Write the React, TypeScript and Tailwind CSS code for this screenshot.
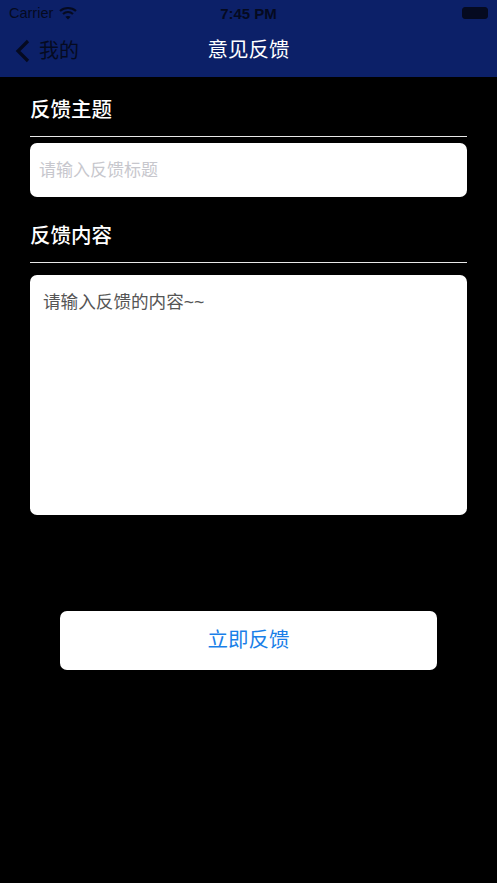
const cjk = "font-['Liberation_Sans','Noto_Sans_CJK_SC',sans-serif]";

function SectionTitle({ children }: { children: string }) {
  return (
    <div className="h-[47px] border-b border-[#e8e8e8] pt-[6px]">
      <h2 className="text-[20.5px] font-medium leading-[28px] text-white">{children}</h2>
    </div>
  );
}

export default function App() {
  return (
    <div className={`${cjk} flex h-[883px] w-[497px] flex-col overflow-hidden bg-black`}>
      {/* Status bar + nav */}
      <header className="h-[77px] shrink-0 bg-[#0c2068]">
        <div className="flex h-[26px] items-center justify-between pl-[9px] pr-[9px] text-[#050a20]">
          <div className="flex w-[120px] items-center gap-[6px]">
            <span className="text-[14.5px] leading-none">Carrier</span>
            <svg width="18" height="14" viewBox="0 0 18 14" fill="none" stroke="currentColor" strokeWidth="2.2">
              <path d="M1 5c4.600-4 11.400-4 16 0" />
              <path d="M4 8c2.900-2.500 7.100-2.500 10 0" />
              <path d="M9 13.500 6.400 10.800c1.500-1.100 3.700-1.100 5.200 0Z" fill="currentColor" stroke="none" />
            </svg>
          </div>
          <span className="text-[15px] font-bold leading-none">7:45 PM</span>
          <div className="flex w-[120px] items-center justify-end">
            <div className="h-[12px] w-[26px] rounded-[3px] border border-[#050a20] bg-[#050a20]" />
          </div>
        </div>
        <div className="relative flex h-[49px] items-center justify-center">
          <div className="absolute left-[15px] top-[13px] flex items-center gap-[9px] text-[#050a20]">
            <svg width="15" height="24" viewBox="0 0 15 24" fill="none" stroke="currentColor" strokeWidth="3.2">
              <path d="M13 2 3 12l10 10" />
            </svg>
            <span className="text-[20px] leading-none">我的</span>
          </div>
          <span className="text-[20.5px] leading-none text-white">意见反馈</span>
        </div>
      </header>

      <main className="flex flex-col px-[30px] pt-[13px]">
        <SectionTitle>反馈主题</SectionTitle>
        <input
          className="mt-[6px] h-[54px] w-full rounded-[7px] bg-white px-[9px] pt-[2px] text-[17px] outline-none placeholder:text-[#c7c7cd]"
          placeholder="请输入反馈标题"
        />
        <div className="mt-[19px]">
          <SectionTitle>反馈内容</SectionTitle>
        </div>
        <textarea
          className="mt-[12px] h-[240px] w-full resize-none rounded-[7px] bg-white px-[13px] py-[15px] text-[17.6px] leading-[25px] outline-none placeholder:text-[#555555]"
          placeholder="请输入反馈的内容~~"
        />
        <button className="mx-[30px] mt-[96px] h-[59px] rounded-[7px] bg-white text-[20.5px] text-[#1a7fe8]">
          立即反馈
        </button>
      </main>
    </div>
  );
}
